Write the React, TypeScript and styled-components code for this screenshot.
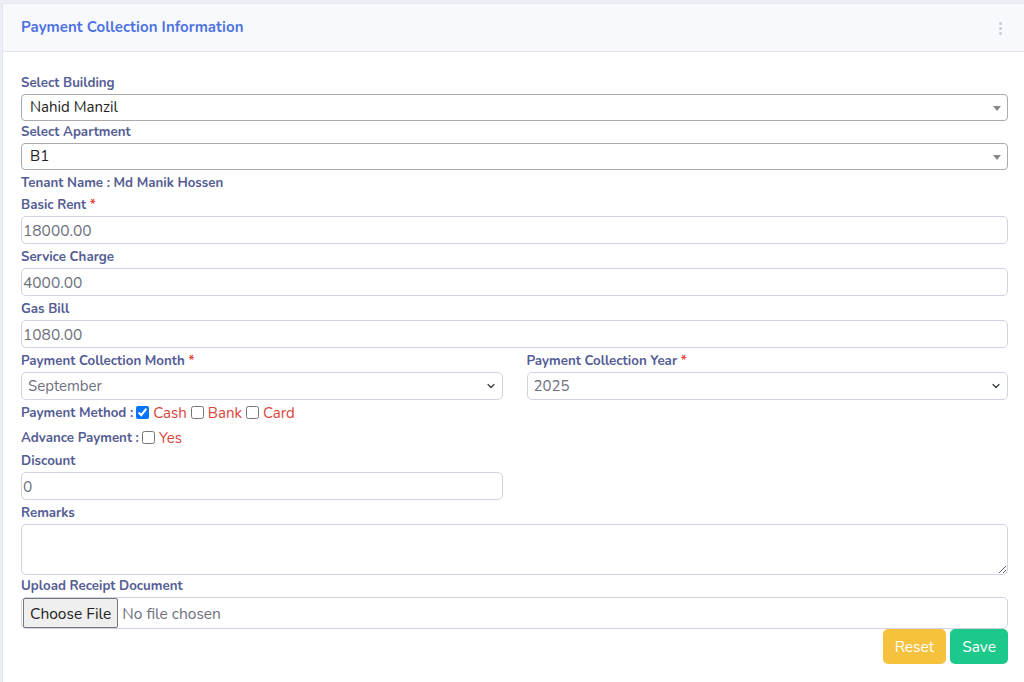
import React from "react";
import styled, { createGlobalStyle } from "styled-components";

const Global = createGlobalStyle`
  html, body { margin: 0; padding: 0; background: #eceef5; }
  body { font-family: "Nunito", "Lato", "Noto Sans", sans-serif; overflow: hidden; }
  * { box-sizing: border-box; }
`;

const Card = styled.div`
  margin: 3px 0 0 2px;
  background: #fff;
  border: 1px solid #e3e6f0;
  border-right: none;
  min-height: 700px;
`;

const CardHeader = styled.div`
  height: 48px;
  background: #f8f9fc;
  border-bottom: 1px solid #e3e6f0;
  display: flex;
  align-items: center;
  justify-content: space-between;
  padding: 0 22px 0 18px;
`;

const Title = styled.h6`
  margin: 0 0 2px;
  font-size: 15px;
  font-weight: 700;
  color: #4e73df;
  letter-spacing: 0.05px;
`;

const Dots = styled.div`
  display: flex;
  flex-direction: column;
  gap: 2px;
  margin-top: 2px;
  span {
    width: 3px;
    height: 3px;
    border-radius: 50%;
    background: #c8cad6;
  }
`;

const Body = styled.div`
  padding: 20px 16px 20px 18px;
  display: flex;
  flex-direction: column;
`;

const Label = styled.label<{ $gap?: number }>`
  display: block;
  font-size: 13.3px;
  font-weight: 700;
  color: #545c94;
  line-height: 22px;
  height: 22px;
  margin-top: ${(p) => p.$gap ?? 0}px;
`;

const Req = styled.span`
  color: #e74a3b;
`;

const Select2 = styled.div`
  position: relative;
  height: 27px;
  border: 1px solid #aaa;
  border-radius: 4px;
  background: #fff;
  font-size: 15px;
  color: #222;
  line-height: 25px;
  padding-left: 8px;
`;

const Caret = styled.span`
  position: absolute;
  right: 6px;
  top: 11px;
  width: 0;
  height: 0;
  border-left: 4px solid transparent;
  border-right: 4px solid transparent;
  border-top: 5px solid #888;
`;

const Input = styled.input`
  display: block;
  width: 100%;
  height: 28px;
  margin-bottom: 2px;
  border: 1px solid #d1d3e2;
  border-radius: 5px;
  padding: 0 0 0 1px;
  font-family: inherit;
  font-size: 15.5px;
  color: #6e707e;
  background: #fff;
  outline: none;
`;

const Row = styled.div`
  display: grid;
  grid-template-columns: 1fr 1fr;
  column-gap: 24px;
`;

const Col = styled.div`
  display: flex;
  flex-direction: column;
`;

const Half = styled.div`
  width: calc(50% - 12px);
`;

const SelectWrap = styled.div`
  position: relative;
  svg {
    position: absolute;
    right: 7px;
    top: 10px;
    pointer-events: none;
  }
`;

const NativeSelect = styled.select`
  display: block;
  width: 100%;
  height: 28px;
  appearance: none;
  border: 1px solid #d1d3e2;
  border-radius: 5px;
  padding: 0 0 0 6px;
  font-family: inherit;
  font-size: 15px;
  color: #6e707e;
  background: #fff;
  outline: none;
`;

const CheckLine = styled.div`
  display: flex;
  align-items: center;
  height: 25px;
  font-size: 13.3px;
  font-weight: 700;
  color: #545c94;
  gap: 3px;
`;

const Check = styled.label`
  display: inline-flex;
  align-items: center;
  gap: 4px;
  font-size: 15px;
  font-weight: 400;
  color: #d9453a;
  margin-right: 1px;
  input {
    margin: 0;
    width: 13px;
    height: 13px;
  }
`;

const TextArea = styled.textarea`
  display: block;
  width: 100%;
  height: 51px;
  border: 1px solid #d1d3e2;
  border-radius: 5px;
  font-family: inherit;
  font-size: 15px;
  color: #6e707e;
  resize: vertical;
  outline: none;
`;

const FileBox = styled.div`
  height: 32px;
  border: 1px solid #d1d3e2;
  border-radius: 5px;
  display: flex;
  align-items: center;
  padding-left: 1px;
  input {
    font-family: inherit;
    font-size: 15.5px;
    color: #6e707e;
  }
  input::file-selector-button {
    font-family: inherit;
    font-size: 15.5px;
    color: #222;
    height: 30px;
    padding: 0 6px;
    margin-right: 4px;
    background: #efefef;
    border: 1px solid #767676;
    border-radius: 2px;
  }
`;

const Actions = styled.div`
  display: flex;
  justify-content: flex-end;
  gap: 4px;
`;

const Btn = styled.button<{ $bg: string }>`
  height: 35px;
  border: none;
  border-radius: 5px;
  background: ${(p) => p.$bg};
  color: #fff;
  font-family: inherit;
  font-size: 15.5px;
  padding: 0 12px;
`;

const Chevron = () => (
  <svg width="10" height="8" viewBox="0 0 16 16">
    <path d="M2 5l6 6 6-6" fill="none" stroke="#343a40" strokeWidth="2.4" strokeLinecap="round" strokeLinejoin="round" />
  </svg>
);

export default function App() {
  return (
    <>
      <Global />
      <Card>
        <CardHeader>
          <Title>Payment Collection Information</Title>
          <Dots>
            <span />
            <span />
            <span />
          </Dots>
        </CardHeader>
        <Body>
          <Label>Select Building</Label>
          <Select2>
            Nahid Manzil
            <Caret />
          </Select2>
          <Label>Select Apartment</Label>
          <Select2>
            B1
            <Caret />
          </Select2>
          <Label $gap={2}>Tenant Name : Md Manik Hossen</Label>
          <Label>
            Basic Rent <Req>*</Req>
          </Label>
          <Input defaultValue="18000.00" />
          <Label>Service Charge</Label>
          <Input defaultValue="4000.00" />
          <Label>Gas Bill</Label>
          <Input defaultValue="1080.00" />
          <Row>
            <Col>
              <Label>
                Payment Collection Month <Req>*</Req>
              </Label>
              <SelectWrap>
                <NativeSelect defaultValue="September">
                  <option>September</option>
                </NativeSelect>
                <Chevron />
              </SelectWrap>
            </Col>
            <Col>
              <Label>
                Payment Collection Year <Req>*</Req>
              </Label>
              <SelectWrap>
                <NativeSelect defaultValue="2025">
                  <option>2025</option>
                </NativeSelect>
                <Chevron />
              </SelectWrap>
            </Col>
          </Row>
          <CheckLine>
            Payment Method :
            <Check>
              <input type="checkbox" defaultChecked /> Cash
            </Check>
            <Check>
              <input type="checkbox" /> Bank
            </Check>
            <Check>
              <input type="checkbox" /> Card
            </Check>
          </CheckLine>
          <CheckLine>
            Advance Payment :
            <Check>
              <input type="checkbox" /> Yes
            </Check>
          </CheckLine>
          <Label>Discount</Label>
          <Half>
            <Input defaultValue="0" />
          </Half>
          <Label>Remarks</Label>
          <TextArea />
          <Label>Upload Receipt Document</Label>
          <FileBox>
            <input type="file" />
          </FileBox>
          <Actions>
            <Btn $bg="#f6c23e">Reset</Btn>
            <Btn $bg="#1cc88a">Save</Btn>
          </Actions>
        </Body>
      </Card>
    </>
  );
}
